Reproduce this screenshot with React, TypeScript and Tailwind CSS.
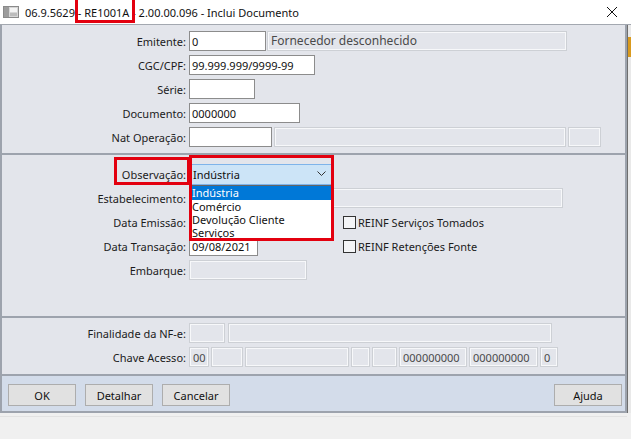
import React from "react";

const LABEL = "w-[187px] shrink-0 pr-[3px] text-right text-[11px] leading-none text-[#1b1b1b]";

function Row({ label, children }: { label?: string; children?: React.ReactNode }) {
  return (
    <div className="flex h-[24px] items-center">
      <div className={LABEL}>{label}</div>
      <div className="flex items-center">{children}</div>
    </div>
  );
}

function TextBox({ w, value, className = "" }: { w: number; value?: string; className?: string }) {
  return (
    <div
      className={`flex h-[20px] shrink-0 items-center border border-[#8c8c8c] bg-white pl-[2px] text-[11px] leading-none text-[#111] ${className}`}
      style={{ width: w }}
    >
      {value}
    </div>
  );
}

function Disabled({ w, value, className = "" }: { w: number; value?: string; className?: string }) {
  return (
    <div
      className={`flex h-[20px] shrink-0 items-center border border-[#cdd0d5] pl-[3px] text-[11px] leading-none text-[#4a4a4a] shadow-[inset_0_0_0_1px_#f7f8fa] ${className}`}
      style={{ width: w }}
    >
      {value}
    </div>
  );
}

function Check({ label }: { label: string }) {
  return (
    <div className="ml-[85px] flex items-center">
      <div className="h-[13px] w-[13px] border border-[#333] bg-[#f4f5f7]" />
      <span className="ml-[2px] text-[11px] leading-none text-[#1b1b1b]">{label}</span>
    </div>
  );
}

function Button({ label }: { label: string }) {
  return (
    <div className="flex h-[22px] w-[68px] items-center justify-center border border-[#adadad] bg-[#e1e1e1] text-[11px] leading-none text-[#111]">
      {label}
    </div>
  );
}

function Separator() {
  return <div className="h-[2px] bg-[#9da3ad]" />;
}

export default function App() {
  return (
    <div className="relative h-[439px] w-[631px] overflow-hidden bg-[#f0f0f0] font-['Noto_Sans',sans-serif]">
      {/* title bar */}
      <div className="flex h-[24px] items-center bg-white">
        <svg width="16" height="12" viewBox="0 0 16 12" className="ml-[3px]">
          <rect x="0.5" y="0.5" width="15" height="11" fill="#d6d6d6" stroke="#8a8a8a" />
          <rect x="1" y="1" width="5" height="10" fill="#9c9c9c" />
          <rect x="7" y="2" width="7" height="4" fill="#f4f4f4" />
          <rect x="7" y="7" width="7" height="3" fill="#bcbcbc" />
        </svg>
        <span className="ml-[6px] text-[11px] leading-none text-[#111]">
          06.9.5629 - RE1001A - 2.00.00.096 - Inclui Documento
        </span>
        <svg width="12" height="12" viewBox="0 0 12 12" className="ml-auto mr-[13px]">
          <path d="M1 1 L11 11 M11 1 L1 11" stroke="#111" strokeWidth="1" />
        </svg>
      </div>
      <div className="h-[1px] bg-[#a3a8b0]" />

      <div className="flex">
        {/* dialog body */}
        <div className="w-[627px] border-x-2 border-[#9da3ad] bg-[#e3e5eb]">
          {/* header fields */}
          <div className="h-[128px] pt-[4px]">
            <Row label="Emitente:">
              <TextBox w={77} value="0" />
              <Disabled w={300} value="Fornecedor desconhecido" className="ml-[1px] text-[12px]" />
            </Row>
            <Row label="CGC/CPF:">
              <TextBox w={126} value="99.999.999/9999-99" />
            </Row>
            <Row label="Série:">
              <TextBox w={66} />
            </Row>
            <Row label="Documento:">
              <TextBox w={111} value="0000000" />
            </Row>
            <Row label="Nat Operação:">
              <TextBox w={83} />
              <Disabled w={292} className="ml-[2px]" />
              <Disabled w={33} className="ml-[2px]" />
            </Row>
          </div>
          <Separator />

          {/* document details */}
          <div className="h-[161px] pt-[7px]">
            <Row label="Observação:">
              <div className="flex h-[21px] w-[143px] items-center justify-between border border-[#7eb4ea] bg-[#cce4f7] pl-[3px] pr-[5px] text-[11px] leading-none text-[#111]">
                <span>Indústria</span>
                <svg width="9" height="6" viewBox="0 0 9 6">
                  <path d="M0.5 0.5 L4.5 4.5 L8.5 0.5" fill="none" stroke="#333" strokeWidth="1" />
                </svg>
              </div>
            </Row>
            <Row label="Estabelecimento:">
              <Disabled w={374} />
            </Row>
            <Row label="Data Emissão:">
              <TextBox w={69} />
              <Check label="REINF Serviços Tomados" />
            </Row>
            <Row label="Data Transação:">
              <TextBox w={69} value="09/08/2021" />
              <Check label="REINF Retenções Fonte" />
            </Row>
            <Row label="Embarque:">
              <Disabled w={118} />
            </Row>
          </div>
          <Separator />

          {/* NF-e */}
          <div className="h-[56px] pt-[3px]">
            <Row label="Finalidade da NF-e:">
              <Disabled w={36} />
              <Disabled w={324} className="ml-[3px]" />
            </Row>
            <Row label="Chave Acesso:">
              <Disabled w={20} value="00" />
              <Disabled w={32} className="ml-[2px]" />
              <Disabled w={104} className="ml-[2px]" />
              <Disabled w={19} className="ml-[2px]" />
              <Disabled w={25} className="ml-[2px]" />
              <Disabled w={68} value="000000000" className="ml-[2px]" />
              <Disabled w={69} value="000000000" className="ml-[2px]" />
              <Disabled w={18} value="0" className="ml-[2px]" />
            </Row>
          </div>
          <Separator />

          {/* actions */}
          <div className="flex h-[35px] items-start bg-[#d3dcea] pl-[6px] pr-[3px] pt-[8px]">
            <div className="flex gap-[9px]">
              <Button label="OK" />
              <Button label="Detalhar" />
              <Button label="Cancelar" />
            </div>
            <div className="ml-auto">
              <Button label="Ajuda" />
            </div>
          </div>
          <div className="h-[2px] bg-[#9da3ad]" />
        </div>

        {/* edge of the window behind */}
        <div className="flex w-[4px] flex-col border-l border-[#6e6e6e] bg-[#e9e9e9]">
          <div className="mt-[12px] h-[20px] bg-[#d99a1e]" />
        </div>
      </div>
      <div className="mt-[3px] h-[1px] w-[627px] bg-[#e2e2e2]" />

      {/* open list of the Observação combo */}
      <div className="absolute left-[190px] top-[185px] w-[142px] border border-[#646464] bg-white text-[11px] text-[#111]">
        <div className="h-[14px] overflow-hidden bg-[#0078d7] pl-[1px] leading-[14px] text-white">Indústria</div>
        <div className="h-[13px] overflow-hidden pl-[1px] leading-[13px]">Comércio</div>
        <div className="h-[13px] overflow-hidden pl-[1px] leading-[13px]">Devolução Cliente</div>
        <div className="h-[13px] overflow-hidden pl-[1px] leading-[13px]">Serviços</div>
      </div>

      {/* highlight frames */}
      <div className="absolute left-[75px] top-[-3px] h-[26px] w-[60px] border-[3px] border-[#e3000f]" />
      <div className="absolute left-[114px] top-[157px] h-[28px] w-[76px] border-[3px] border-[#e3000f]" />
      <div className="absolute left-[189px] top-[155px] h-[86px] w-[145px] border-[3px] border-[#e3000f]" />
    </div>
  );
}
